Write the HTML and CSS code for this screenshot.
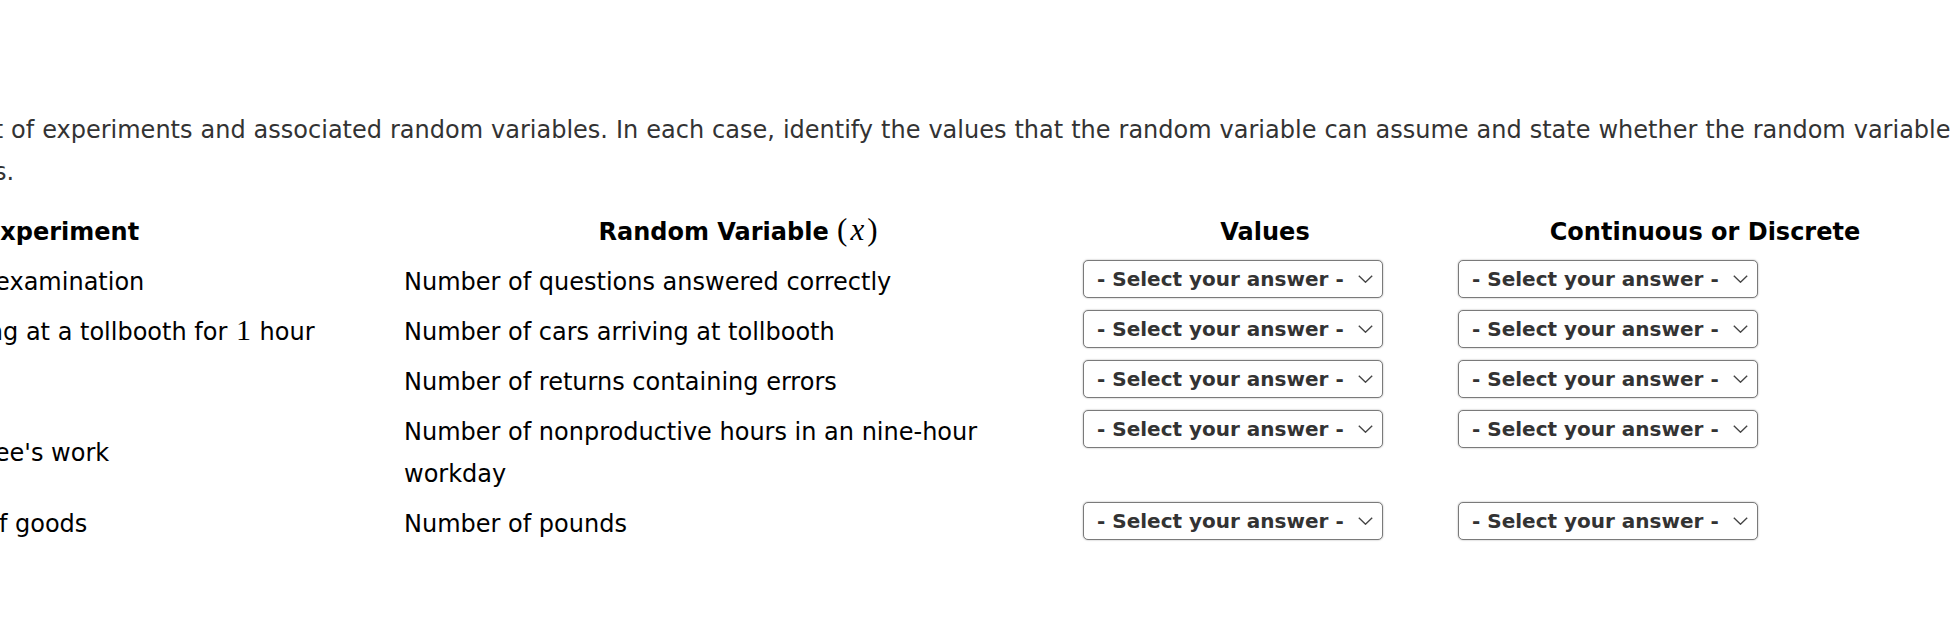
FILE: index.html
```html
<!DOCTYPE html>
<html lang="en">
<head>
<meta charset="utf-8">
<title>Random variables</title>
<link rel="stylesheet" href="styles.css">
</head>
<body>
<main class="page">
  <p class="intro">Presented below is a list of experiments and associated random variables. In each case, identify the values that the random variable can assume and state whether the random variable is discrete or continuous.</p>
  <table class="rv-table">
    <colgroup>
      <col class="c-exp">
      <col class="c-rv">
      <col class="c-val">
      <col class="c-cd">
    </colgroup>
    <thead>
      <tr>
        <th>Experiment</th>
        <th>Random Variable <span class="math">(<i>x</i>)</span></th>
        <th>Values</th>
        <th>Continuous or Discrete</th>
      </tr>
    </thead>
    <tbody>
      <tr>
        <td class="exp">a. Take a <span class="num">20</span>-question examination</td>
        <td>Number of questions answered correctly</td>
        <td class="ans"><span class="dd"><select><option>- Select your answer -</option></select><svg class="chev" viewBox="0 0 15 8" width="15" height="8"><polyline points="0.8,0.8 7.5,7.2 14.2,0.8"/></svg></span></td>
        <td class="ans"><span class="dd"><select><option>- Select your answer -</option></select><svg class="chev" viewBox="0 0 15 8" width="15" height="8"><polyline points="0.8,0.8 7.5,7.2 14.2,0.8"/></svg></span></td>
      </tr>
      <tr>
        <td class="exp">b. Observe cars arriving at a tollbooth for <span class="num">1</span> hour</td>
        <td>Number of cars arriving at tollbooth</td>
        <td class="ans"><span class="dd"><select><option>- Select your answer -</option></select><svg class="chev" viewBox="0 0 15 8" width="15" height="8"><polyline points="0.8,0.8 7.5,7.2 14.2,0.8"/></svg></span></td>
        <td class="ans"><span class="dd"><select><option>- Select your answer -</option></select><svg class="chev" viewBox="0 0 15 8" width="15" height="8"><polyline points="0.8,0.8 7.5,7.2 14.2,0.8"/></svg></span></td>
      </tr>
      <tr>
        <td class="exp">c. Audit <span class="num">50</span> tax returns</td>
        <td>Number of returns containing errors</td>
        <td class="ans"><span class="dd"><select><option>- Select your answer -</option></select><svg class="chev" viewBox="0 0 15 8" width="15" height="8"><polyline points="0.8,0.8 7.5,7.2 14.2,0.8"/></svg></span></td>
        <td class="ans"><span class="dd"><select><option>- Select your answer -</option></select><svg class="chev" viewBox="0 0 15 8" width="15" height="8"><polyline points="0.8,0.8 7.5,7.2 14.2,0.8"/></svg></span></td>
      </tr>
      <tr>
        <td class="exp">d. Observe an employee's work</td>
        <td>Number of nonproductive hours in an nine-hour workday</td>
        <td class="ans"><span class="dd"><select><option>- Select your answer -</option></select><svg class="chev" viewBox="0 0 15 8" width="15" height="8"><polyline points="0.8,0.8 7.5,7.2 14.2,0.8"/></svg></span></td>
        <td class="ans"><span class="dd"><select><option>- Select your answer -</option></select><svg class="chev" viewBox="0 0 15 8" width="15" height="8"><polyline points="0.8,0.8 7.5,7.2 14.2,0.8"/></svg></span></td>
      </tr>
      <tr>
        <td class="exp">e. Weigh a shipment of goods</td>
        <td>Number of pounds</td>
        <td class="ans"><span class="dd"><select><option>- Select your answer -</option></select><svg class="chev" viewBox="0 0 15 8" width="15" height="8"><polyline points="0.8,0.8 7.5,7.2 14.2,0.8"/></svg></span></td>
        <td class="ans"><span class="dd"><select><option>- Select your answer -</option></select><svg class="chev" viewBox="0 0 15 8" width="15" height="8"><polyline points="0.8,0.8 7.5,7.2 14.2,0.8"/></svg></span></td>
      </tr>
    </tbody>
  </table>
</main>
</body>
</html>
```

FILE: styles.css
```css
html, body {
  margin: 0;
  padding: 0;
  background: #ffffff;
  overflow: hidden;
}

body {
  font-family: "DejaVu Sans", Verdana, sans-serif;
}

.page {
  margin-left: -276px;
  width: 2233px;
  padding-top: 109px;
}

.intro {
  margin: 0 0 14px -13px;
  font-size: 24px;
  line-height: 42px;
  color: #333333;
  word-spacing: 0.35px;
}

.rv-table {
  border-collapse: collapse;
  border-spacing: 0;
  table-layout: fixed;
  width: 2233px;
  font-size: 24px;
  line-height: 42px;
  color: #000000;
}

.c-exp { width: 674px; }
.c-rv  { width: 679px; }
.c-val { width: 375px; }
.c-cd  { width: 505px; }

.rv-table th,
.rv-table td {
  padding: 4px 5px 4px 6px;
}

.rv-table th {
  font-weight: bold;
  text-align: center;
  vertical-align: middle;
}

.rv-table td {
  text-align: left;
  vertical-align: top;
}

.rv-table td.exp {
  vertical-align: middle;
}

.rv-table td.ans {
  padding-top: 3px;
  padding-bottom: 5px;
}

.math,
.num {
  font-family: "Liberation Serif", "Times New Roman", serif;
  font-weight: normal;
  line-height: 1;
}

.math {
  font-size: 31px;
}

.num {
  font-size: 30px;
  margin: 0 1px;
}

.math i {
  font-style: italic;
  margin: 0 3px 0 3px;
}

.dd {
  position: relative;
  display: flex;
  width: 300px;
  height: 38px;
}

.dd select {
  -webkit-appearance: none;
  appearance: none;
  box-sizing: border-box;
  width: 300px;
  height: 38px;
  margin: 0;
  padding: 0 30px 0 13px;
  border: 1px solid #7a7a7a;
  border-radius: 5px;
  box-shadow: 0 0 2px rgba(0, 0, 0, 0.35);
  background: #ffffff;
  font-family: "DejaVu Sans", Verdana, sans-serif;
  font-weight: bold;
  font-size: 20px;
  line-height: 36px;
  color: #333333;
}

.chev {
  position: absolute;
  left: 275px;
  top: 15px;
  pointer-events: none;
}

.chev polyline {
  fill: none;
  stroke: #444444;
  stroke-width: 1.4;
}
```
